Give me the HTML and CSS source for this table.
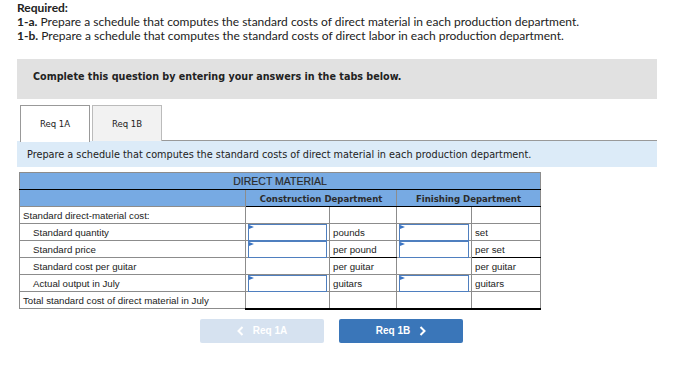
FILE: index.html
```html
<!DOCTYPE html>
<html lang="en">
<head>
    <meta charset="UTF-8">
    <meta name="viewport" content="width=device-width, initial-scale=1.0">
    <title>Standard Costs - Direct Material</title>
    <link rel="stylesheet" href="styles.css">
</head>
<body>
    <div class="page">
        <div class="required">
            <p class="req-title">Required:</p>
            <p><b>1-a.</b> Prepare a schedule that computes the standard costs of direct material in each production department.</p>
            <p><b>1-b.</b> Prepare a schedule that computes the standard costs of direct labor in each production department.</p>
        </div>

        <div class="notice">Complete this question by entering your answers in the tabs below.</div>

        <div class="tabs">
            <div class="tab active">Req 1A</div>
            <div class="tab">Req 1B</div>
            <div class="tab-line"></div>
        </div>

        <div class="instructions">Prepare a schedule that computes the standard costs of direct material in each production department.</div>

        <table class="schedule">
            <colgroup>
                <col class="c-label">
                <col class="c-input1">
                <col class="c-unit1">
                <col class="c-input2">
                <col class="c-unit2">
            </colgroup>
            <thead>
                <tr class="head-top">
                    <th colspan="5">DIRECT MATERIAL</th>
                </tr>
                <tr class="head-dept">
                    <th></th>
                    <th colspan="2">Construction Department</th>
                    <th colspan="2">Finishing Department</th>
                </tr>
            </thead>
            <tbody>
                <tr>
                    <td class="label">Standard direct-material cost:</td>
                    <td></td><td></td><td></td><td></td>
                </tr>
                <tr>
                    <td class="label indent">Standard quantity</td>
                    <td class="entry"><div class="box"></div></td>
                    <td class="unit">pounds</td>
                    <td class="entry"><div class="box"></div></td>
                    <td class="unit">set</td>
                </tr>
                <tr class="before-calc">
                    <td class="label indent">Standard price</td>
                    <td class="entry"><div class="box"></div></td>
                    <td class="unit">per pound</td>
                    <td class="entry"><div class="box"></div></td>
                    <td class="unit">per set</td>
                </tr>
                <tr>
                    <td class="label indent">Standard cost per guitar</td>
                    <td></td>
                    <td class="unit">per guitar</td>
                    <td></td>
                    <td class="unit">per guitar</td>
                </tr>
                <tr>
                    <td class="label indent">Actual output in July</td>
                    <td class="entry"><div class="box"></div></td>
                    <td class="unit">guitars</td>
                    <td class="entry"><div class="box"></div></td>
                    <td class="unit">guitars</td>
                </tr>
                <tr class="total">
                    <td class="label">Total standard cost of direct material in July</td>
                    <td></td><td></td><td></td><td></td>
                </tr>
            </tbody>
        </table>

        <div class="nav">
            <button class="nav-btn prev">
                <svg width="7" height="10" viewBox="0 0 7 10"><polyline points="5.5,1 1.5,5 5.5,9" fill="none" stroke="#fff" stroke-width="2"/></svg>
                Req 1A
            </button>
            <button class="nav-btn next">
                Req 1B
                <svg width="7" height="10" viewBox="0 0 7 10"><polyline points="1.5,1 5.5,5 1.5,9" fill="none" stroke="#fff" stroke-width="2"/></svg>
            </button>
        </div>
    </div>
</body>
</html>
```

FILE: styles.css
```css
body {
    margin: 0;
    background-color: #ffffff;
    color: #333;
}

.page {
    width: 640px;
    margin-left: 17px;
}

/* question text */
.required {
    font-family: Lato, "Open Sans", sans-serif;
    font-size: 12px;
    color: #222;
    padding-top: 1px;
}

.required p {
    margin: 0;
    line-height: 14px;
}

.req-title {
    font-weight: bold;
}

.notice {
    margin-top: 16px;
    height: 40px;
    background-color: #e1e1e1;
    font-family: "DejaVu Sans", sans-serif;
    font-stretch: condensed;
    font-weight: bold;
    font-size: 10.7px;
    color: #222;
    line-height: 36px;
    padding-left: 16px;
    box-sizing: border-box;
}

/* tabs */
.tabs {
    display: flex;
    align-items: flex-end;
    margin-top: 6px;
    padding-left: 3px;
}

.tab {
    width: 70px;
    height: 36px;
    box-sizing: border-box;
    border: 1px solid #bbb;
    border-bottom: none;
    background-color: #f2f2f2;
    font-family: "DejaVu Sans", sans-serif;
    font-stretch: condensed;
    font-size: 9.5px;
    color: #222;
    text-align: center;
    line-height: 36px;
    margin-right: 2px;
}

.tab.active {
    background-color: #fff;
    border-color: #999;
    height: 37px;
    margin-bottom: -1px;
}

.tab-line {
    flex: 1;
    border-bottom: 1px solid #999;
    margin-left: -2px;
}

.instructions {
    height: 26px;
    background-color: #dcebf8;
    font-family: "DejaVu Sans", sans-serif;
    font-stretch: condensed;
    font-size: 10.8px;
    color: #222;
    line-height: 27px;
    padding-left: 10px;
    box-sizing: border-box;
}

/* schedule table */
.schedule {
    margin-top: 5px;
    margin-left: 2px;
    border-collapse: collapse;
    table-layout: fixed;
    width: 521px;
    font-family: "Liberation Sans", Arial, sans-serif;
    font-size: 9.7px;
    color: #222;
}

.c-label { width: 226px; }
.c-input1 { width: 84px; }
.c-unit1 { width: 67px; }
.c-input2 { width: 75px; }
.c-unit2 { width: 69px; }

.schedule th,
.schedule td {
    border: 1px solid #8c8c8c;
    height: 17px;
    padding: 0 3px;
    box-sizing: border-box;
}

.schedule th {
    background-color: #77aae3;
    color: #2b2b2b;
    font-weight: bold;
    font-size: 9.5px;
    height: 17px;
}

.head-top th {
    font-weight: normal;
    font-size: 10.5px;
    border-bottom: 1px solid #000;
    -webkit-text-stroke: 0.2px #2b2b2b;
}

.head-dept th {
    font-family: "DejaVu Sans", sans-serif;
    font-stretch: condensed;
    font-size: 9.5px;
}

.head-dept th:not(:first-child) {
    border-bottom: 1px solid #000;
}

.label {
    padding-left: 2px;
}

.label.indent {
    padding-left: 13px;
}

.unit {
    padding-left: 3px;
}

.before-calc td.unit {
    border-bottom: 1px solid #000;
}

.total td:not(.label) {
    border-top: 1px solid #000;
    border-bottom: 2px solid #000;
}

/* answer entry cells */
.entry {
    position: relative;
    padding: 0;
}

.box {
    height: 17px;
    border: 1px solid #4f7fbf;
    box-sizing: border-box;
    margin: -1px;
    position: relative;
}

.box::before {
    content: "";
    position: absolute;
    top: 0;
    left: 0;
    border-left: 5px solid #3a74c4;
    border-top: 2px solid transparent;
    border-bottom: 2px solid transparent;
}

/* bottom navigation */
.nav {
    display: flex;
    gap: 15px;
    margin-top: 9px;
    padding-left: 183px;
}

.nav-btn {
    width: 124px;
    height: 24px;
    border: none;
    border-radius: 2px;
    color: #fff;
    font-family: "Liberation Sans", Arial, sans-serif;
    font-weight: bold;
    font-size: 10px;
    display: flex;
    align-items: center;
    justify-content: center;
    gap: 9px;
}

.prev {
    background-color: #d6e2f0;
}

.next {
    background-color: #3a76b9;
}
```
